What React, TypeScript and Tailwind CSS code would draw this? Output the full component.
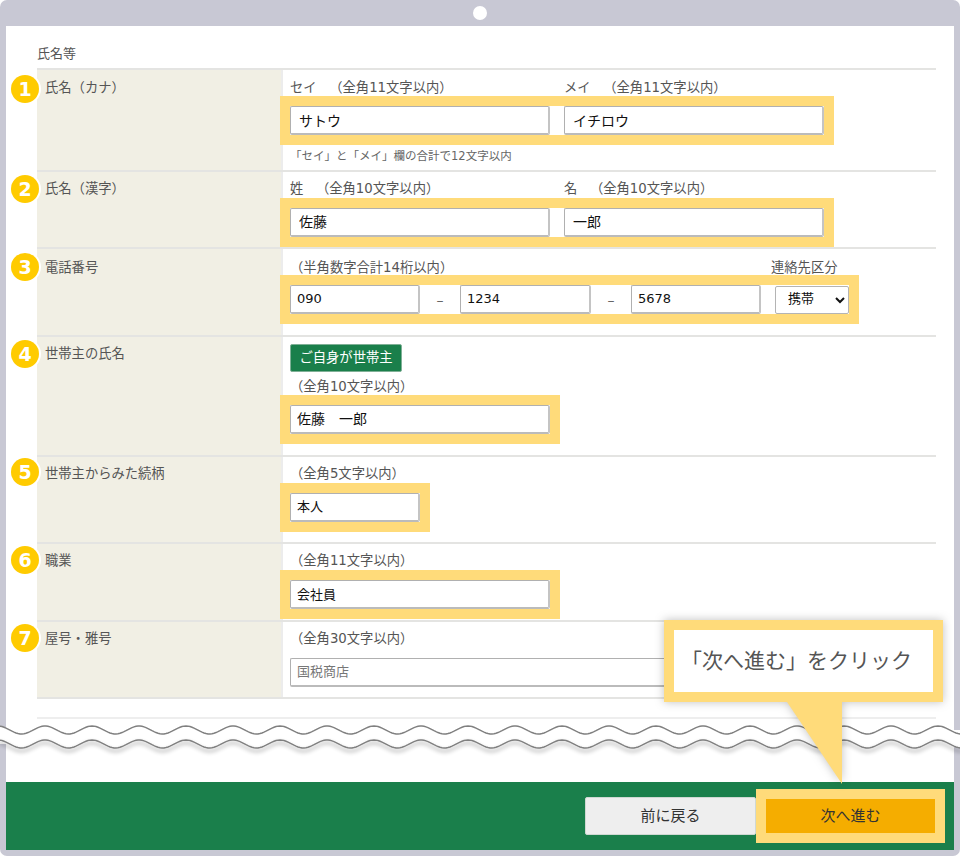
import React from "react";

const inputBase =
  "block h-[29px] rounded-[2px] border border-[#b0b0b0] border-r-2 border-b-2 border-r-[#c4c4c4] border-b-[#bbbbbb] bg-white text-[#111] outline-none";

function wave(mid: number): string {
  const pts: string[] = [];
  for (let x = -2; x <= 962; x += 2) {
    const y = mid - 4 * Math.cos((2 * Math.PI * (x - 45)) / 47);
    pts.push(`${x},${y.toFixed(2)}`);
  }
  return pts.join(" ");
}

function Field({ value, className }: { value: string; className: string }) {
  return <input readOnly value={value} className={`${inputBase} ${className}`} />;
}

function Row({
  n,
  label,
  badgeTop,
  height,
  pad,
  children,
}: {
  n: number;
  label: string;
  badgeTop: string;
  height: string;
  pad: string;
  children: React.ReactNode;
}) {
  return (
    <div className={`relative flex border-t-2 border-[#e4e4e2] ${height}`}>
      <div
        className={`absolute -left-[26px] flex h-7 w-7 items-center justify-center rounded-full bg-[#ffcb00] text-[19px] leading-none font-bold text-white shadow-[0_0_0_2px_#ffffff] ${badgeTop}`}
      >
        {n}
      </div>
      <div className={`w-[244px] shrink-0 bg-[#f1efe4] pl-2 text-[13.3px] leading-[18px] text-[#555] ${pad}`}>
        {label}
      </div>
      <div className={`min-w-0 flex-1 border-l-2 border-[#ececec] pl-[7px] text-[13.3px] leading-[18px] text-[#555] ${pad}`}>
        {children}
      </div>
    </div>
  );
}

const Hl = ({ className, children }: { className: string; children: React.ReactNode }) => (
  <div className={`-ml-[10px] flex w-fit border-[10px] border-[#ffdb7a] ${className}`}>{children}</div>
);

export default function App() {
  return (
    <div className="relative h-[856px] w-[960px] overflow-hidden bg-white font-['DejaVu_Sans','Noto_Sans_CJK_JP',sans-serif]">
      <div className="flex h-[856px] w-[960px] flex-col rounded-[7px] bg-[#c8c8d4] px-[6px] pt-[26px] pb-[6px]">
        <div className="flex min-h-0 flex-1 flex-col bg-white">
          <div className="flex-1 pr-[18px] pl-[31px]">
            <div className="flex h-[42px] items-end pb-[5px] text-[13px] leading-[18px] text-[#555]">氏名等</div>

            <Row n={1} label="氏名（カナ）" badgeTop="top-[5px]" height="h-[102px]" pad="pt-[9px]">
              <div className="flex">
                <div className="w-[274px]">
                  セイ　<span className="ml-[6px]">（全角11文字以内）</span>
                </div>
                <div>
                  メイ　<span className="ml-[6px]">（全角11文字以内）</span>
                </div>
              </div>
              <Hl className="-mt-px gap-[14px]">
                <Field value="サトウ" className="w-[260px] px-2 text-[14px]" />
                <Field value="イチロウ" className="w-[260px] px-2 text-[14px]" />
              </Hl>
              <div className="mt-[2px] text-[11.5px] leading-[18px] text-[#666]">「セイ」と「メイ」欄の合計で12文字以内</div>
            </Row>

            <Row n={2} label="氏名（漢字）" badgeTop="top-[3px]" height="h-[77px]" pad="pt-2">
              <div className="flex">
                <div className="w-[274px]">
                  姓　<span className="ml-[6px]">（全角10文字以内）</span>
                </div>
                <div>
                  名　<span className="ml-[6px]">（全角10文字以内）</span>
                </div>
              </div>
              <Hl className="gap-[14px]">
                <Field value="佐藤" className="h-[28px] w-[260px] px-2 pb-[3px] text-[14px]" />
                <Field value="一郎" className="h-[28px] w-[260px] px-2 pb-[3px] text-[14px]" />
              </Hl>
            </Row>

            <Row n={3} label="電話番号" badgeTop="top-[4px]" height="h-[88px]" pad="pt-[10px]">
              <div className="flex">
                <div className="w-[481px]">（半角数字合計14桁以内）</div>
                <div>連絡先区分</div>
              </div>
              <Hl className="-mt-[2px] items-center">
                <Field value="090" className="w-[130px] px-[6px] pb-[2px] text-[13px]" />
                <span className="w-10 text-center text-[14px] text-[#666]">–</span>
                <Field value="1234" className="w-[131px] px-[6px] pb-[2px] text-[13px]" />
                <span className="w-10 text-center text-[14px] text-[#666]">–</span>
                <Field value="5678" className="w-[130px] px-[6px] pb-[2px] text-[13px]" />
                <select className="ml-[14px] h-[28px] w-[74px] rounded-[2px] border border-[#b4b4b4] bg-white pb-[2px] pl-2 text-[13px] text-[#111]">
                  <option>携帯</option>
                </select>
              </Hl>
            </Row>

            <Row n={4} label="世帯主の氏名" badgeTop="top-[3px]" height="h-[120px]" pad="pt-2">
              <div className="-mt-px flex h-7 w-[112px] items-center justify-center rounded-[2px] border border-[#7fb096] bg-[#1a7f4b] text-[13.3px] text-white">
                ご自身が世帯主
              </div>
              <div className="mt-[6px]">（全角10文字以内）</div>
              <Hl className="-mt-px">
                <Field value="佐藤　一郎" className="w-[260px] px-[6px] pb-[2px] text-[14px]" />
              </Hl>
            </Row>

            <Row n={5} label="世帯主からみた続柄" badgeTop="top-px" height="h-[87px]" pad="pt-2">
              <div>（全角5文字以内）</div>
              <Hl className="">
                <Field value="本人" className="h-[28px] w-[130px] px-[6px] pb-1 text-[13px]" />
              </Hl>
            </Row>

            <Row n={6} label="職業" badgeTop="top-[2px]" height="h-[78px]" pad="pt-2">
              <div>（全角11文字以内）</div>
              <Hl className="">
                <Field value="会社員" className="h-[28px] w-[260px] px-[6px] pb-[2px] text-[13px]" />
              </Hl>
            </Row>

            <div className="border-b-2 border-[#e4e4e2]">
              <Row n={7} label="屋号・雅号" badgeTop="top-[2px]" height="h-[77px]" pad="pt-2">
                <div>（全角30文字以内）</div>
                <input
                  readOnly
                  value="国税商店"
                  className={`${inputBase} mt-[10px] h-[28px] w-[520px] px-[6px] pb-1 text-[13px] text-[#777]`}
                />
              </Row>
            </div>

            <div className="mt-[18px] border-t-2 border-[#eeeeee]" />
          </div>

          <div className="flex h-[68px] shrink-0 items-center justify-end bg-[#1a7f4b] pr-[9px]">
            <div className="flex h-[38px] w-[171px] items-center justify-center rounded-[2px] border border-[#cfd8d2] bg-[#eeeeee] text-[15px] text-[#333]">
              前に戻る
            </div>
            <div className="flex h-[54px] w-[189px] items-center justify-center border-[10px] border-[#ffdb7a] bg-[#f5ad00] text-[15px] text-[#333]">
              次へ進む
            </div>
          </div>
        </div>
      </div>

      <div className="absolute top-[6px] left-[473px] h-[14px] w-[14px] rounded-full bg-white" />

      <svg className="absolute top-[716px] left-0" width="960" height="46" viewBox="0 716 960 46">
        <defs>
          <filter id="waveShadow" x="-5%" y="-100%" width="110%" height="400%">
            <feDropShadow dx="0" dy="3" stdDeviation="2" floodColor="#000000" floodOpacity="0.45" />
          </filter>
        </defs>
        <polygon points={`${wave(730)} 962,744 -2,744`} fill="#ffffff" />
        <polygon points={`${wave(744)} 962,730 -2,730`} fill="#ffffff" />
        <polyline points={wave(744)} fill="none" stroke="#808080" strokeWidth="1.5" filter="url(#waveShadow)" />
        <polyline points={wave(730)} fill="none" stroke="#808080" strokeWidth="1.5" />
      </svg>

      <div className="absolute top-[620px] left-[664px] drop-shadow-[0_0_5px_rgba(0,0,0,0.25)]">
        <div className="flex h-[82px] w-[279px] items-center border-[10px] border-[#ffdb7a] bg-white pl-[7px] text-[21px] leading-none whitespace-nowrap text-[#555]">
          「次へ進む」をクリック
        </div>
        <svg className="absolute top-[82px] left-[123px]" width="55" height="82" viewBox="0 0 55 82">
          <polygon points="0,0 55,0 55,82" fill="#ffdb7a" />
        </svg>
      </div>
    </div>
  );
}
